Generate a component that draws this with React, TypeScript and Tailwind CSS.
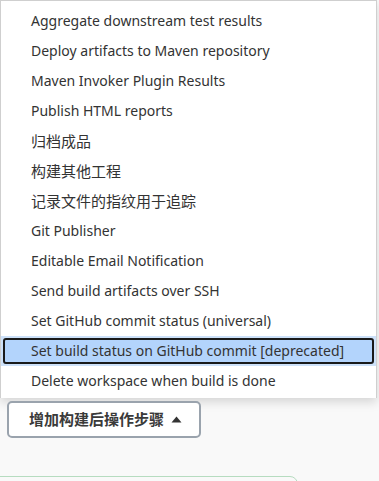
const items = [
  "Aggregate downstream test results",
  "Deploy artifacts to Maven repository",
  "Maven Invoker Plugin Results",
  "Publish HTML reports",
  "归档成品",
  "构建其他工程",
  "记录文件的指纹用于追踪",
  "Git Publisher",
  "Editable Email Notification",
  "Send build artifacts over SSH",
  "Set GitHub commit status (universal)",
  "Set build status on GitHub commit [deprecated]",
  "Delete workspace when build is done",
];

const ACTIVE = 11;
const isCjk = (s: string) => /[\u4e00-\u9fff]/.test(s);

export default function App() {
  return (
    <div
      className="w-[379px] h-[481px] overflow-hidden bg-[#f9f9f9] text-[#333]"
      style={{ fontFamily: '"Noto Sans", "Noto Sans CJK SC", sans-serif' }}
    >
      {/* dropdown menu */}
      <div className="w-[377px] h-[398px] bg-white border border-[#cfcfcf] border-b-0 pt-[5px] shadow-[0_4px_10px_rgba(0,0,0,0.15)]">
        {items.map((label, i) =>
          i === ACTIVE ? (
            <div key={label} className="h-[30px] bg-[#cde1f9] px-[2px] py-[2px]">
              <div className="h-full rounded-[3px] border-2 border-[#1a1a1a] bg-[#b3d4fc] pl-[26px] flex items-center text-[14px] leading-none whitespace-nowrap">
                {label}
              </div>
            </div>
          ) : (
            <div
              key={label}
              className={
                isCjk(label)
                  ? "h-[30px] pl-[30px] flex items-center text-[15px] leading-none whitespace-nowrap"
                  : "h-[30px] pl-[30px] flex items-center text-[14px] leading-none whitespace-nowrap"
              }
            >
              {label}
            </div>
          )
        )}
      </div>

      {/* add post-build step button */}
      <button className="ml-[7px] mt-[3px] h-[37px] w-[194px] rounded-[5px] border-2 border-[#9aa3ad] bg-white pl-[20px] flex items-center gap-[7px] text-[15px] font-semibold text-[#3a3a3a]">
        增加构建后操作步骤
        <svg width="11" height="7" viewBox="0 0 11 7">
          <path d="M0.5 6.5 L5.5 0.5 L10.5 6.5 Z" fill="#333" />
        </svg>
      </button>

      {/* next section */}
      <div className="mt-[38px] -ml-[10px] w-[308px] h-[20px] rounded-t-[8px] border border-[#b6dcc0] bg-[#f9f9f9]" />
    </div>
  );
}
